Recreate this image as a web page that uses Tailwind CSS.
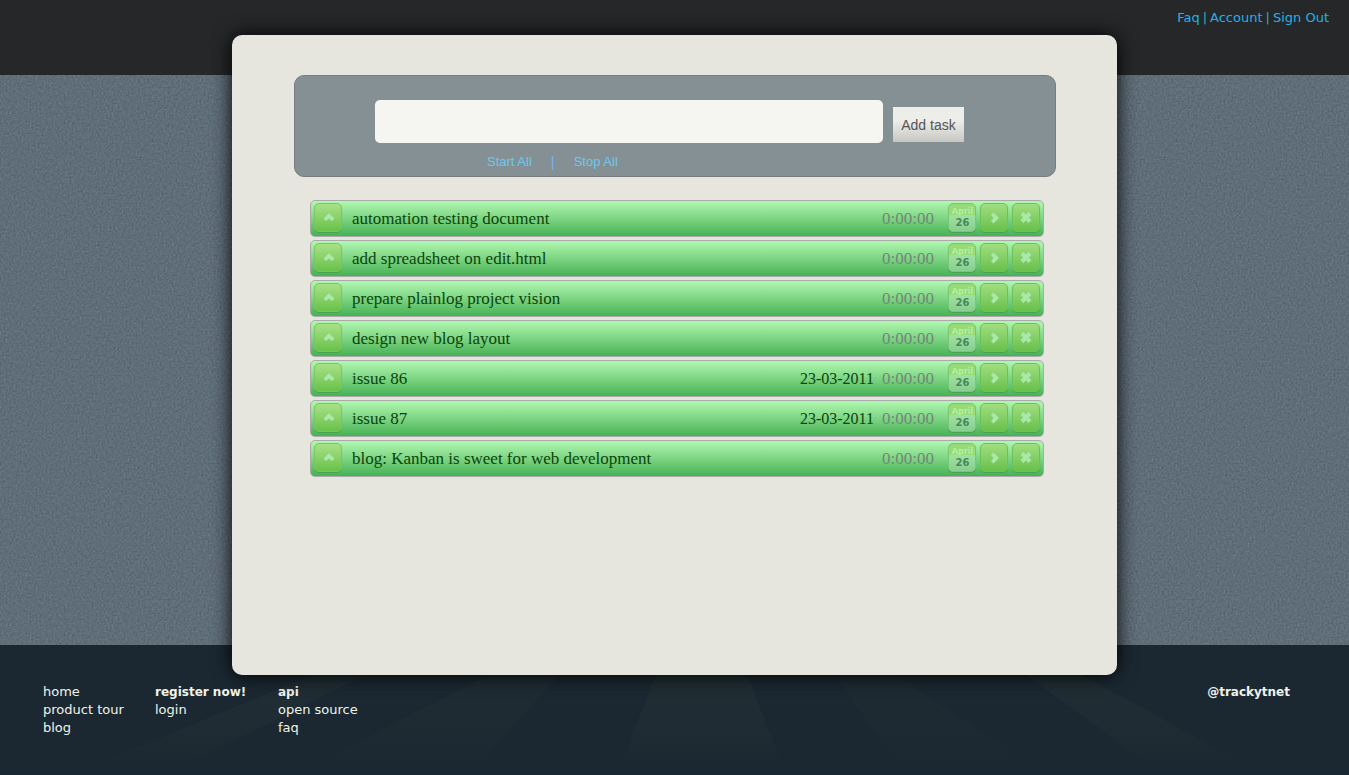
<!DOCTYPE html>
<html lang="en">
<head>
<meta charset="utf-8">
<meta name="viewport" content="width=device-width, initial-scale=1">
<title>Tasks</title>
<script src="https://cdn.jsdelivr.net/npm/@tailwindcss/browser@4"></script>
</head>
<body class="min-h-screen flex flex-col bg-[#5f6d78] font-['DejaVu_Sans',sans-serif] text-[13px] leading-[18px]">

<header class="h-[75px] shrink-0 bg-[#252729] text-[#22b1e8]">
  <nav class="flex justify-end gap-[3px] pr-5 pt-[9px]">
    <a href="#">Faq</a><span class="text-[#20b8b0]">|</span><a href="#">Account</a><span class="text-[#20b8b0]">|</span><a href="#">Sign Out</a>
  </nav>
</header>

<main class="relative grow flex justify-center px-4">
  <!-- grain over the slate background -->
  <svg class="absolute inset-0 w-full h-full" aria-hidden="true">
    <filter id="grain" x="0" y="0" width="100%" height="100%" color-interpolation-filters="sRGB">
      <feTurbulence type="fractalNoise" baseFrequency="0.5" numOctaves="2" seed="4"/>
      <feColorMatrix type="matrix" values="0.14 0.06 0 0 0.275  0.14 0.06 0 0 0.33  0.14 0.06 0 0 0.373  0 0 0 0 1"/>
    </filter>
    <rect width="100%" height="100%" filter="url(#grain)"/>
  </svg>

  <div class="relative z-10 w-full max-w-[885px] min-h-[640px] -mt-10 -mb-[30px] rounded-[10px] bg-[#e6e6de] pt-10 pl-[62px] pr-[61px] pb-10 shadow-[0_0_20px_#000000]">
    <form class="h-[102px] rounded-[10px] border border-[#757b7e] bg-[#859095] pt-6 px-20 font-['Liberation_Sans',sans-serif]">
      <div class="flex items-end gap-[10px] pr-[11px]">
        <input type="text" aria-label="New task" class="grow h-[43px] min-w-0 rounded-[5px] bg-[#f5f6f1] px-3 text-lg outline-none">
        <button type="button" class="h-[35px] w-[71px] mb-px bg-linear-to-b from-[#edeeea] from-40% to-[#c6c7c3] text-[14px] text-[#555555]">Add task</button>
      </div>
      <div class="flex gap-[19px] pl-28 pt-[10px] text-[13px] text-[#6cc9ee]">
        <a href="#">Start All</a><span class="text-[15px] text-[#6cb5f0]">|</span><a href="#">Stop All</a>
      </div>
    </form>
    <ul id="tasks" class="mt-[23px] ml-4 mr-3 flex flex-col gap-[3px] font-['Liberation_Serif',serif]"></ul>
  </div>
</main>

<footer class="relative h-[130px] shrink-0 bg-[#1b2832] border-b-4 border-[#182632] text-[#f1f3ea]">
  <svg class="absolute inset-0 w-full h-full" viewBox="0 0 1349 126" preserveAspectRatio="none" aria-hidden="true">
    <defs>
      <linearGradient id="beam" gradientUnits="userSpaceOnUse" x1="0" y1="30" x2="0" y2="122">
        <stop offset="0" stop-color="#212d34"/><stop offset=".5" stop-color="#1f2c33"/><stop offset="1" stop-color="#1b2832"/>
      </linearGradient>
    </defs>
    <g fill="url(#beam)">
      <path d="M313 30 L95 120 H185 L365 30z"/>
      <path d="M488 30 L310 122 H475 L560 30z" opacity=".7"/>
      <path d="M656 30 L620 122 H783 L747 30z"/>
      <path d="M835 30 L900 122 H1035 L895 30z" opacity=".5"/>
      <path d="M1027 30 L1152 122 H1250 L1082 30z"/>
    </g>
  </svg>
  <div class="relative flex pl-[43px] pr-[59px] pt-[38px]">
    <ul class="w-28"><li><a href="#">home</a></li><li><a href="#">product tour</a></li><li><a href="#">blog</a></li></ul>
    <ul class="w-[123px]"><li><a href="#" class="font-bold text-[12px]">register now!</a></li><li><a href="#">login</a></li></ul>
    <ul><li><a href="#" class="font-bold text-[12px]">api</a></li><li><a href="#">open source</a></li><li><a href="#">faq</a></li></ul>
    <a href="#" class="ml-auto font-bold text-[12px]">@trackytnet</a>
  </div>
</footer>

<template id="row">
  <li class="flex items-start h-[37px] rounded-[5px] border border-[#a9aaa9] bg-linear-to-b from-[#b0f8b0] to-[#45b255] pt-[2px] px-[3px] leading-[32px] text-[#0a450a]">
    <button type="button" aria-label="Move to top" class="w-7 h-[29px] rounded-[5px] border border-[#79c566] bg-linear-to-b from-[#a8e188] to-[#68c148] shadow-[0_1px_1px_#00000022]">
      <svg class="w-full h-full" viewBox="0 0 26 27"><path d="M14 9 L19.5 14.5 L17 17 L14 14.5 L11 17 L8.500 14.5z" fill="#a9e8a9"/></svg>
    </button>
    <span data-title class="ml-[10px] grow text-[17px]"></span>
    <span data-date class="mr-2 text-[16px]"></span>
    <span data-time class="w-[53px] text-[17px] text-[#748578]">0:00:00</span>
    <button type="button" aria-label="Due April 26" class="ml-[13px] flex flex-col w-7 h-[29px] overflow-hidden rounded-[5px] border border-[#7ac972] bg-[#97da78] font-['Open_Sans',sans-serif] font-bold shadow-[0_1px_1px_#00000022]">
      <span class="h-[11px] w-full pl-px text-[9px] leading-[14px] text-[#b4f0a4]">April</span>
      <span class="grow w-full pl-px bg-linear-to-b from-[#a3e0a3] to-[#86cf8e] font-['DejaVu_Sans',sans-serif] text-[10px] leading-[16px] text-[#44895a]">26</span>
    </button>
    <button type="button" aria-label="Start" class="ml-1 w-7 h-[29px] rounded-[5px] border border-[#6fc25a] bg-linear-to-b from-[#a0de80] to-[#68c04b] shadow-[0_1px_1px_#00000022]">
      <svg class="w-full h-full" viewBox="0 0 26 27"><path d="M12.500 8.500 L18 14 L12.500 19.500 L10 17 L12.500 14 L10 11z" fill="#a9e8a9"/></svg>
    </button>
    <button type="button" aria-label="Delete" class="ml-1 w-7 h-[29px] rounded-[5px] border border-[#6fc25a] bg-linear-to-b from-[#a0de80] to-[#68c04b] shadow-[0_1px_1px_#00000022]">
      <svg class="w-full h-full" viewBox="0 0 26 27"><path d="M9 9.5 L17 17.5 M17 9.5 L9 17.5" fill="none" stroke="#a9e8a9" stroke-width="4"/></svg>
    </button>
  </li>
</template>
<script>
const tasks = [
  ["automation testing document", ""],
  ["add spreadsheet on edit.html", ""],
  ["prepare plainlog project vision", ""],
  ["design new blog layout", ""],
  ["issue 86", "23-03-2011"],
  ["issue 87", "23-03-2011"],
  ["blog: Kanban is sweet for web development", ""]
];
const template = document.getElementById("row");
for (const [title, date] of tasks) {
  const row = template.content.cloneNode(true);
  row.querySelector("[data-title]").textContent = title;
  row.querySelector("[data-date]").textContent = date;
  document.getElementById("tasks").append(row);
}
</script>
</body>
</html>
